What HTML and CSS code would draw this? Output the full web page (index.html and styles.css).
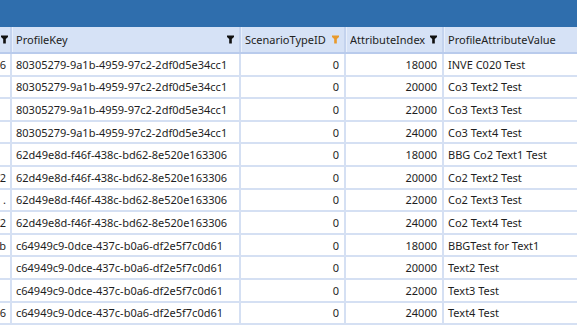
FILE: index.html
```html
<!DOCTYPE html>
<html lang="en">
<head>
    <meta charset="UTF-8">
    <title>Profile Attributes</title>
    <link rel="stylesheet" href="styles.css">
</head>
<body>
    <div class="titlebar"></div>
    <div class="grid-wrap">
        <table class="grid">
            <colgroup>
                <col class="c-id">
                <col class="c-key">
                <col class="c-type">
                <col class="c-index">
                <col class="c-value">
            </colgroup>
            <thead>
                <tr>
                    <th><div class="th-inner"><span class="th-label"></span><svg class="funnel" viewBox="0 0 8 9"><path d="M0 0H8V1.5L5.5 4V9H2.5V4L0 1.5Z"/></svg></div></th>
                    <th><div class="th-inner"><span class="th-label">ProfileKey</span><svg class="funnel" viewBox="0 0 8 9"><path d="M0 0H8V1.5L5.5 4V9H2.5V4L0 1.5Z"/></svg></div></th>
                    <th><div class="th-inner"><span class="th-label">ScenarioTypeID</span><svg class="funnel active" viewBox="0 0 8 9"><path d="M0 0H8V1.5L5.5 4V9H2.5V4L0 1.5Z"/></svg></div></th>
                    <th><div class="th-inner"><span class="th-label">AttributeIndex</span><svg class="funnel" viewBox="0 0 8 9"><path d="M0 0H8V1.5L5.5 4V9H2.5V4L0 1.5Z"/></svg></div></th>
                    <th><div class="th-inner"><span class="th-label">ProfileAttributeValue</span></div></th>
                </tr>
            </thead>
            <tbody id="rows"></tbody>
        </table>
    </div>

    <script>
        const rows = [
            ['6', '80305279-9a1b-4959-97c2-2df0d5e34cc1', 0, 18000, 'INVE C020 Test'],
            ['', '80305279-9a1b-4959-97c2-2df0d5e34cc1', 0, 20000, 'Co3 Text2 Test'],
            ['', '80305279-9a1b-4959-97c2-2df0d5e34cc1', 0, 22000, 'Co3 Text3 Test'],
            ['', '80305279-9a1b-4959-97c2-2df0d5e34cc1', 0, 24000, 'Co3 Text4 Test'],
            ['', '62d49e8d-f46f-438c-bd62-8e520e163306', 0, 18000, 'BBG Co2 Text1 Test'],
            ['2', '62d49e8d-f46f-438c-bd62-8e520e163306', 0, 20000, 'Co2 Text2 Test'],
            ['.', '62d49e8d-f46f-438c-bd62-8e520e163306', 0, 22000, 'Co2 Text3 Test'],
            ['2', '62d49e8d-f46f-438c-bd62-8e520e163306', 0, 24000, 'Co2 Text4 Test'],
            ['b', 'c64949c9-0dce-437c-b0a6-df2e5f7c0d61', 0, 18000, 'BBGTest for Text1'],
            ['', 'c64949c9-0dce-437c-b0a6-df2e5f7c0d61', 0, 20000, 'Text2 Test'],
            ['', 'c64949c9-0dce-437c-b0a6-df2e5f7c0d61', 0, 22000, 'Text3 Test'],
            ['6', 'c64949c9-0dce-437c-b0a6-df2e5f7c0d61', 0, 24000, 'Text4 Test']
        ];

        const body = document.getElementById('rows');
        rows.forEach(r => {
            const tr = document.createElement('tr');
            tr.innerHTML = `
                <td class="clip"><div class="clip-inner">${r[0]}</div></td>
                <td>${r[1]}</td>
                <td class="num">${r[2]}</td>
                <td class="num">${r[3]}</td>
                <td>${r[4]}</td>
            `;
            body.appendChild(tr);
        });
    </script>
</body>
</html>
```

FILE: styles.css
```css
body {
    margin: 0;
    background: #ffffff;
    font-family: 'Noto Sans', 'Open Sans', sans-serif;
    font-size: 11px;
    color: #1e1e1e;
    overflow: hidden;
}
.titlebar {
    height: 27px;
    background-color: #2f6ead;
}
.grid-wrap {
    width: 577px;
    overflow: hidden;
}
.grid {
    width: 640px;
    border-collapse: collapse;
    table-layout: fixed;
}
.c-id { width: 11px; }
.c-key { width: 229px; }
.c-type { width: 105px; }
.c-index { width: 98px; }
.c-value { width: 197px; }

th {
    height: 25px;
    padding: 0;
    background-color: #d6e2f6;
    border-right: 2px solid #c4d3ee;
    border-bottom: 2px solid #b9cbec;
    font-weight: normal;
    text-align: left;
    color: #222;
}
.th-inner {
    display: flex;
    align-items: center;
    padding: 0 5px 0 3px;
    border-left: 1px solid #e8effb;
    height: 25px;
}
.th-label {
    flex: 1;
    white-space: nowrap;
    overflow: hidden;
}
.funnel {
    width: 7px;
    height: 9px;
    fill: #111;
    flex: none;
}
.funnel.active {
    fill: #e89a2c;
}
th:first-child .th-inner {
    padding: 0 2px 0 0;
    border-left: none;
    justify-content: flex-end;
}
th:first-child .th-label { flex: 0; }

td {
    height: 20.6px;
    padding: 0 4px 0 4px;
    border-right: 2px solid #d5e0f3;
    border-bottom: 2px solid #d5e0f3;
    white-space: nowrap;
    overflow: hidden;
}
td.num {
    text-align: right;
    padding-right: 5px;
}
td.clip {
    padding: 0;
}
.clip-inner {
    display: flex;
    justify-content: flex-end;
    overflow: hidden;
    padding-right: 4px;
}
```
